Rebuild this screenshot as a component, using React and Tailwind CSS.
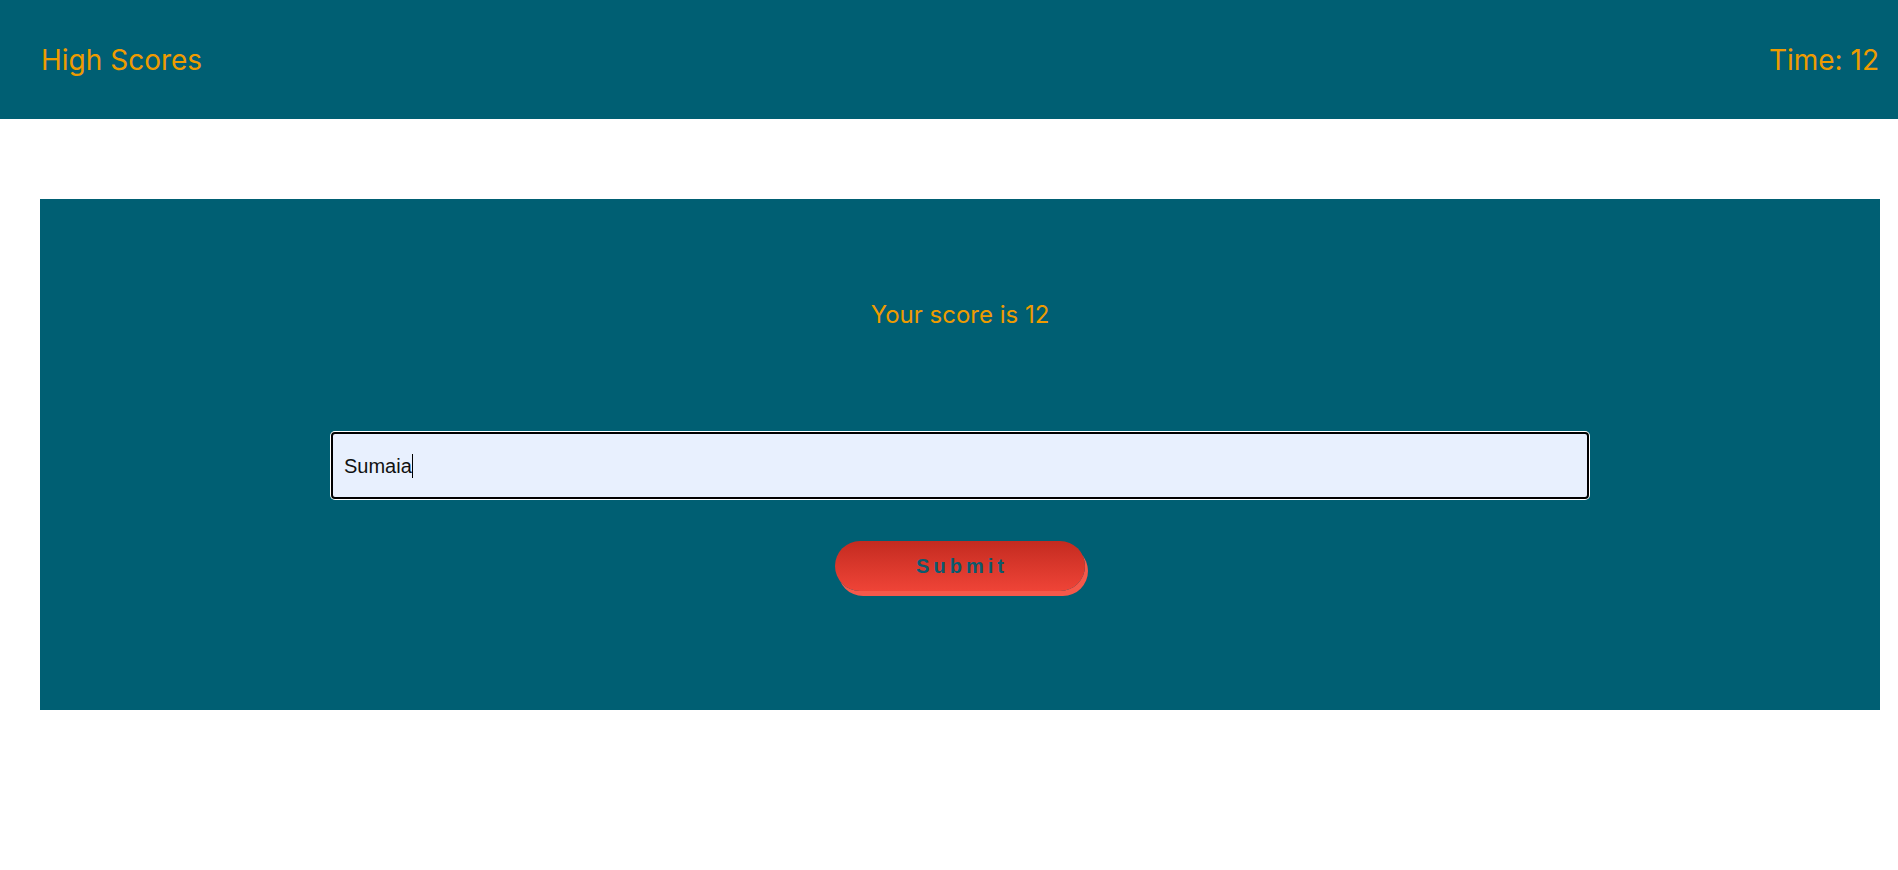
import React from "react";

const App = () => {
  return (
    <div className="min-h-screen bg-white" style={{ fontFamily: "Inter, 'Noto Sans', sans-serif" }}>
      <header className="h-[119px] bg-[#005f73] flex items-center justify-between pl-[41px] pr-[19px] text-[#ee9b00] text-[28px]">
        <a href="#" className="leading-none">High Scores</a>
        <span className="leading-none">Time: 12</span>
      </header>

      <main className="ml-[40px] mr-[18px] mt-[80px] h-[511px] bg-[#005f73] flex flex-col items-center">
        <h2 className="mt-[98px] h-[36px] leading-[36px] text-[24px] text-[#ee9b00]">
          Your score is 12
        </h2>

        <div className="mt-[99px] w-[1258px] h-[67px] flex items-center px-[11px] bg-[#e8f0fe] border-2 border-black rounded-[4px] ring-1 ring-white font-['Liberation_Sans',Arial,sans-serif] text-[20px] text-[#111]">
          <span>Sumaia</span>
          <span className="inline-block w-[1px] h-[24px] bg-black"></span>
        </div>

        <button
          type="button"
          className="mt-[42px] w-[250px] h-[50px] rounded-full bg-gradient-to-b from-[#c42b20] to-[#ef4437] shadow-[3px_5px_0_#f5584a] text-[#0b5a6e] font-bold text-[20px] tracking-[4px] pl-[4px] font-['Liberation_Sans',Arial,sans-serif]"
        >
          Submit
        </button>
      </main>
    </div>
  );
};

export default App;
